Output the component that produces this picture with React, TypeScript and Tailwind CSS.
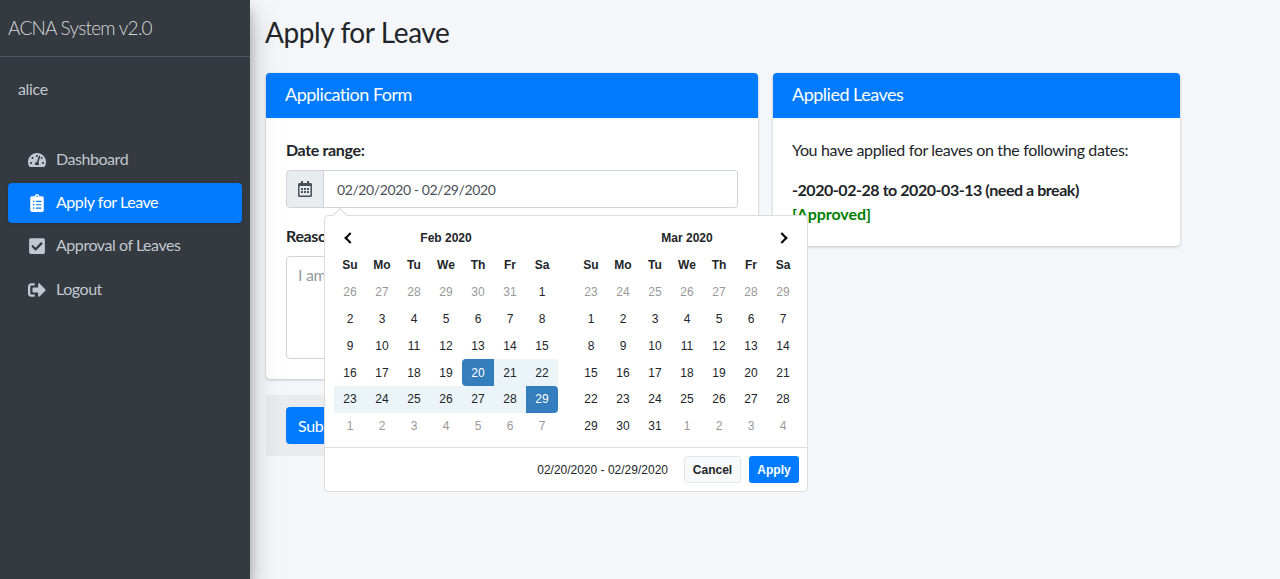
import { FaTachometerAlt, FaClipboardList, FaCheckSquare, FaSignOutAlt, FaRegCalendarAlt } from 'react-icons/fa'

const NAV = [
  { label: 'Dashboard', icon: FaTachometerAlt },
  { label: 'Apply for Leave', icon: FaClipboardList, active: true },
  { label: 'Approval of Leaves', icon: FaCheckSquare },
  { label: 'Logout', icon: FaSignOutAlt },
]

const DAYS = ['Su', 'Mo', 'Tu', 'We', 'Th', 'Fr', 'Sa']

type Cell = { d: number; off?: boolean }

const seq = (from: number, to: number, off?: boolean): Cell[] => {
  const out: Cell[] = []
  for (let d = from; d <= to; d++) out.push({ d, off })
  return out
}

const FEB = [...seq(26, 31, true), ...seq(1, 29), ...seq(1, 7, true)]
const MAR = [...seq(23, 29, true), ...seq(1, 31), ...seq(1, 4, true)]

function cellStyle(i: number, isLeft: boolean) {
  if (!isLeft) return ''
  if (i === 25) return 'bg-[#357ebd] text-white rounded-tl-[4px] rounded-bl-[4px]'
  if (i === 34) return 'bg-[#357ebd] text-white rounded-tr-[4px] rounded-br-[4px]'
  if (i > 25 && i < 34) return 'bg-[#ebf4f8]'
  return ''
}

function Month({ title, cells, isLeft }: { title: string; cells: Cell[]; isLeft: boolean }) {
  return (
    <div className="w-[224px]">
      <div className="h-[29px] flex items-center justify-between">
        <span className="w-[32px] flex justify-center">
          {isLeft && <span className="w-[8px] h-[8px] border-l-2 border-b-2 border-black rotate-45" />}
        </span>
        <span className="font-bold text-[#212529]">{title}</span>
        <span className="w-[32px] flex justify-center">
          {!isLeft && <span className="w-[8px] h-[8px] mr-[3px] border-r-2 border-t-2 border-black rotate-45" />}
        </span>
      </div>
      <div className="grid grid-cols-7">
        {DAYS.map((d) => (
          <div key={d} className="h-[26.8px] flex items-center justify-center font-bold text-[#212529]">{d}</div>
        ))}
        {cells.map((c, i) => (
          <div
            key={i}
            className={`h-[26.8px] flex items-center justify-center ${c.off ? 'text-[#999]' : 'text-[#212529]'} ${cellStyle(i, isLeft)}`}
          >
            {c.d}
          </div>
        ))}
      </div>
    </div>
  )
}

export default function App() {
  return (
    <div className="flex h-[579px] overflow-hidden bg-[#f4f6f9] text-[#212529] tracking-[-0.35px] font-['Lato','Noto_Sans',sans-serif]">
      {/* Sidebar */}
      <aside className="w-[250px] shrink-0 bg-[#343a40] shadow-[0_14px_28px_rgba(0,0,0,0.25),0_10px_10px_rgba(0,0,0,0.22)] z-10 px-[8px]">
        <div className="h-[57px] -mx-[8px] px-[8px] border-b border-[#4b545c] flex items-center text-[19px] tracking-[-0.75px] font-light text-[#ffffffcc]">
          ACNA System v2.0
        </div>
        <div className="pl-[10px] pt-[20px] h-[83px] text-[#c2c7d0]">alice</div>
        <nav className="flex flex-col gap-[3.2px]">
          {NAV.map(({ label, icon: Icon, active }) => (
            <a
              key={label}
              className={`h-[40px] rounded-[4px] flex items-center pl-[18px] gap-[8px] tracking-[-0.45px] ${active ? 'bg-[#007bff] text-white shadow-[0_1px_3px_rgba(0,0,0,0.2)]' : 'text-[#c2c7d0]'}`}
            >
              <span className="w-[22px] flex justify-center"><Icon className="text-[18px]" /></span>
              <span className="mb-[2px]">{label}</span>
            </a>
          ))}
        </nav>
      </aside>

      {/* Content */}
      <main className="flex-1 relative pl-[16px] pt-[11px]">
        <h1 className="text-[28px] leading-[42px] font-normal h-[62px] -ml-[1px] tracking-[-0.4px]">Apply for Leave</h1>
        <div className="flex gap-[15px] items-start">
          <div className="w-[492px]">
            <section className="bg-white rounded-[4px] shadow-[0_0_1px_rgba(0,0,0,0.125),0_1px_3px_rgba(0,0,0,0.2)] h-[306px]">
              <div className="h-[45px] pb-[2px] bg-[#007bff] text-white text-[18px] tracking-[-0.5px] rounded-t-[4px] flex items-center px-[19px]">Application Form</div>
              <div className="px-[20px] pt-[20px]">
                <label className="block font-bold h-[32px] leading-[24px]">Date range:</label>
                <div className="flex h-[38px]">
                  <span className="w-[38px] bg-[#e9ecef] border border-[#ced4da] rounded-l-[4px] flex items-center justify-center text-[#495057]">
                    <FaRegCalendarAlt />
                  </span>
                  <div className="flex-1 border border-l-0 border-[#ced4da] rounded-r-[4px] px-[13px] flex items-center text-[#495057] text-[14px] tracking-[-0.4px]">02/20/2020 - 02/29/2020</div>
                </div>
                <label className="block font-bold mt-[16px] h-[32px] leading-[24px]">Reason:</label>
                <div className="h-[103px] border border-[#ced4da] rounded-[4px] px-[11px] py-[6px] text-[#939ba2]">I am</div>
              </div>
            </section>
            <div className="mt-[16px] h-[61px] bg-[#e9ebee] rounded-[2px] px-[20px] py-[12px]">
              <button className="h-[37px] px-[12px] bg-[#007bff] text-white rounded-[4px]">Submit</button>
            </div>
          </div>
          <section className="w-[407px] h-[173px] bg-white rounded-[4px] shadow-[0_0_1px_rgba(0,0,0,0.125),0_1px_3px_rgba(0,0,0,0.2)]">
            <div className="h-[45px] pb-[2px] bg-[#007bff] text-white text-[18px] tracking-[-0.5px] rounded-t-[4px] flex items-center px-[19px]">Applied Leaves</div>
            <div className="px-[19px] pt-[20px]">
              <p className="leading-[24px]">You have applied for leaves on the following dates:</p>
              <p className="mt-[16px] font-bold leading-[24px] tracking-[-0.45px]">-2020-02-28 to 2020-03-13 (need a break)</p>
              <p className="font-bold leading-[24px] tracking-[-0.05px] text-[#008000]">[Approved]</p>
            </div>
          </section>
        </div>

        {/* Date picker popup */}
        <div className="absolute left-[74px] top-[215px] w-[484px] h-[277px] bg-white border border-[#ddd] rounded-[4px] font-['Liberation_Sans',Arial,sans-serif] text-[12px] tracking-normal">
          <span className="absolute left-[10px] -top-[6px] w-[10px] h-[10px] bg-white border-l border-t border-[#ddd] rotate-45" />
          <div className="flex justify-between pl-[9px] pr-[8px] pt-[7px] h-[231px]">
            <Month title="Feb 2020" cells={FEB} isLeft />
            <Month title="Mar 2020" cells={MAR} isLeft={false} />
          </div>
          <div className="h-[44px] border-t border-[#ddd] flex items-center justify-end pr-[8px]">
            <span className="font-normal text-[#212529] mr-[16px]">02/20/2020 - 02/29/2020</span>
            <button className="w-[57px] h-[27px] mr-[8px] bg-[#f8f9fa] border border-[#e5e7ea] rounded-[3px] font-bold text-[#212529]">Cancel</button>
            <button className="w-[50px] h-[27px] bg-[#007bff] text-white rounded-[3px] font-bold">Apply</button>
          </div>
        </div>
      </main>
    </div>
  )
}
